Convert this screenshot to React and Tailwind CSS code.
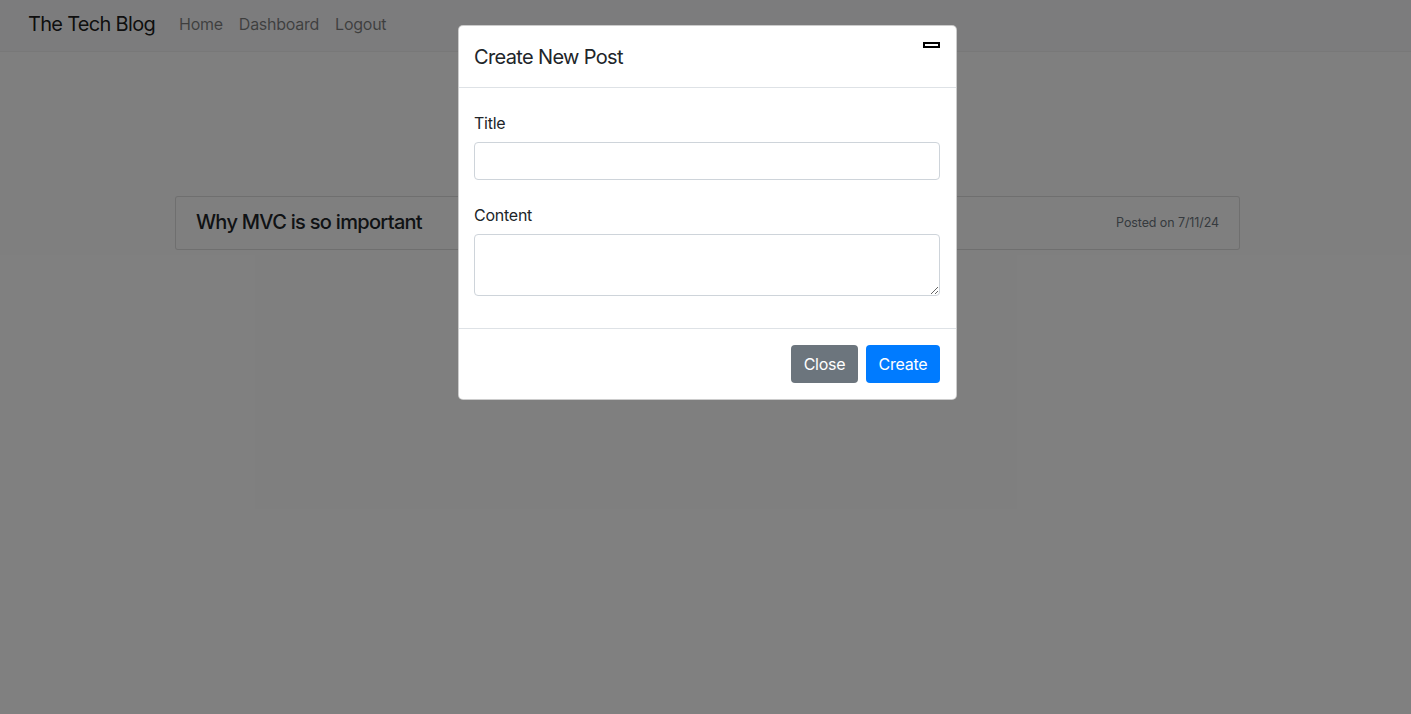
import { useState } from "react";

const font = { fontFamily: "Inter, 'Liberation Sans', sans-serif" };

function Navbar() {
  return (
    <nav className="h-[52px] bg-[#f8f9fa] border-b border-[#f0f0f0] flex items-center pl-[28px] pb-1">
      <a className="text-[20px] text-black/90 mr-[16px] tracking-[-0.7px]">The Tech Blog</a>
      <div className="flex items-center text-[16px] text-black/50 tracking-[-0.25px]">
        <a className="px-2">Home</a>
        <a className="px-2">Dashboard</a>
        <a className="px-2">Logout</a>
      </div>
    </nav>
  );
}

function PostCard() {
  return (
    <div className="ml-[175px] mt-[144px] w-[1065px] h-[54px] border border-black/[0.125] rounded-[3px] bg-white flex items-center justify-between px-5">
      <h5 className="text-[20px] text-[#212529] font-medium tracking-[-0.7px] -mt-[2px]">Why MVC is so important</h5>
      <small className="text-[12.5px] text-[#6c757d] tracking-[-0.1px]">Posted on 7/11/24</small>
    </div>
  );
}

function CreateModal() {
  const [title, setTitle] = useState("");
  const [content, setContent] = useState("");

  return (
    <div className="absolute left-[458px] top-[25px] w-[499px] bg-white border border-black/20 rounded-[5px] text-[#212529]">
      {/* Header */}
      <div className="h-[62px] border-b border-[#dee2e6] flex items-start justify-between pl-[15px] pr-4 pt-4">
        <h5 className="text-[20px] leading-[30px] tracking-[-0.65px]">Create New Post</h5>
        {/* close button, glyph missing */}
        <button className="w-[17px] h-[6px] border-2 border-black bg-white"></button>
      </div>

      {/* Body */}
      <div className="pl-[15px] pr-4 pt-[23px] pb-4">
        <label className="block text-[16px] leading-6 mb-[7px] tracking-[-0.25px]">Title</label>
        <input
          value={title}
          onChange={(e) => setTitle(e.target.value)}
          className="block w-full h-[38px] border border-[#ced4da] rounded-[4px] px-3 outline-none"
        />
        <label className="block text-[16px] leading-6 mb-[7px] mt-[23px] tracking-[-0.25px]">Content</label>
        <textarea
          value={content}
          onChange={(e) => setContent(e.target.value)}
          className="block w-full h-[62px] border border-[#ced4da] rounded-[4px] px-3 py-1.5 outline-none"
        />
        <div className="h-4"></div>
      </div>

      {/* Footer */}
      <div className="border-t border-[#dee2e6] p-4 flex justify-end gap-2">
        <button className="h-[38px] w-[67px] rounded-[4px] bg-[#6c757d] text-white text-[16px] tracking-[-0.25px]">Close</button>
        <button className="h-[38px] w-[74px] rounded-[4px] bg-[#007bff] text-white text-[16px] tracking-[-0.25px]">Create</button>
      </div>
    </div>
  );
}

export default function App() {
  return (
    <div className="relative w-full h-[714px] bg-white overflow-hidden" style={font}>
      <Navbar />
      <PostCard />
      {/* Backdrop */}
      <div className="absolute inset-0 bg-black/50"></div>
      <CreateModal />
    </div>
  );
}
